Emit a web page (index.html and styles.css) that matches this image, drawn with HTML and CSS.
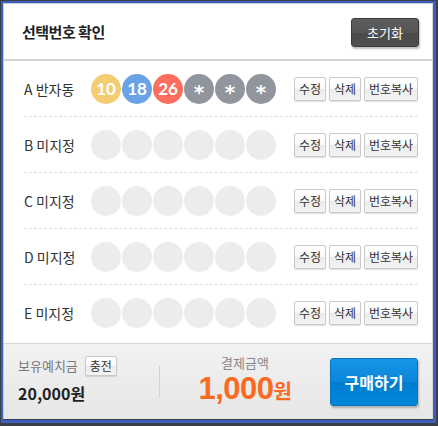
FILE: index.html
```html
<!DOCTYPE html>
<html>
<head>
  <meta charset="UTF-8">
  <title>선택번호 확인</title>
  <link rel="stylesheet" href="styles.css">
</head>
<body>
  <div class="frame">
    <div class="panel">
      <div class="panel-head">
        <h1>선택번호 확인</h1>
        <button class="reset-btn">초기화</button>
      </div>

      <ul class="slot-list">
        <li class="slot">
          <span class="slot-name">A 반자동</span>
          <span class="balls">
            <span class="ball yellow">10</span>
            <span class="ball blue">18</span>
            <span class="ball red">26</span>
            <span class="ball auto">*</span>
            <span class="ball auto">*</span>
            <span class="ball auto">*</span>
          </span>
          <span class="actions">
            <button class="mini-btn">수정</button>
            <button class="mini-btn">삭제</button>
            <button class="mini-btn wide">번호복사</button>
          </span>
        </li>
        <li class="slot">
          <span class="slot-name">B 미지정</span>
          <span class="balls">
            <span class="ball"></span><span class="ball"></span><span class="ball"></span>
            <span class="ball"></span><span class="ball"></span><span class="ball"></span>
          </span>
          <span class="actions">
            <button class="mini-btn">수정</button>
            <button class="mini-btn">삭제</button>
            <button class="mini-btn wide">번호복사</button>
          </span>
        </li>
        <li class="slot">
          <span class="slot-name">C 미지정</span>
          <span class="balls">
            <span class="ball"></span><span class="ball"></span><span class="ball"></span>
            <span class="ball"></span><span class="ball"></span><span class="ball"></span>
          </span>
          <span class="actions">
            <button class="mini-btn">수정</button>
            <button class="mini-btn">삭제</button>
            <button class="mini-btn wide">번호복사</button>
          </span>
        </li>
        <li class="slot">
          <span class="slot-name">D 미지정</span>
          <span class="balls">
            <span class="ball"></span><span class="ball"></span><span class="ball"></span>
            <span class="ball"></span><span class="ball"></span><span class="ball"></span>
          </span>
          <span class="actions">
            <button class="mini-btn">수정</button>
            <button class="mini-btn">삭제</button>
            <button class="mini-btn wide">번호복사</button>
          </span>
        </li>
        <li class="slot">
          <span class="slot-name">E 미지정</span>
          <span class="balls">
            <span class="ball"></span><span class="ball"></span><span class="ball"></span>
            <span class="ball"></span><span class="ball"></span><span class="ball"></span>
          </span>
          <span class="actions">
            <button class="mini-btn">수정</button>
            <button class="mini-btn">삭제</button>
            <button class="mini-btn wide">번호복사</button>
          </span>
        </li>
      </ul>

      <div class="panel-foot">
        <div class="deposit">
          <div class="deposit-label">보유예치금 <button class="mini-btn charge">충전</button></div>
          <div class="deposit-value">20,000원</div>
        </div>
        <div class="pay">
          <div class="pay-label">결제금액</div>
          <div class="pay-value">1,000<small>원</small></div>
        </div>
        <button class="buy-btn">구매하기</button>
      </div>
    </div>
  </div>
</body>
</html>
```

FILE: styles.css
```css
/* Lotto selection confirm panel */
body {
  margin: 0;
  background: #3b3e45;
  font-family: "Noto Sans CJK KR", "Noto Sans", sans-serif;
  color: #333;
}
.frame {
  width: 430px;
  height: 417px;
  margin: 1px 0 0 1px;
  border: solid #3d5fc0;
  border-width: 2px 3px 3px 2px;
}
.panel {
  height: 415px;
  border: 1px solid #c9ccd3;
  border-right-color: #d8d8d8;
  border-bottom: none;
  background: #fff;
  display: flex;
  flex-direction: column;
}
.panel-head {
  height: 55px;
  border-bottom: 2px solid #d3d3d3;
  display: flex;
  align-items: center;
  justify-content: space-between;
  padding: 0 13px 0 18px;
}
.panel-head h1 {
  margin: 0;
  font-size: 15px;
  font-weight: bold;
  color: #222;
  letter-spacing: -0.5px;
  line-height: 20px;
}
.reset-btn {
  width: 68px;
  height: 29px;
  margin-top: 1px;
  border: 1px solid #3a3a3a;
  border-radius: 3px;
  background: linear-gradient(#5e5e5e 0%, #555 50%, #4a4a4a 51%, #505050 100%);
  color: #fff;
  font-family: inherit;
  font-size: 13px;
  line-height: 1;
  box-shadow: 1px 2px 2px rgba(0,0,0,0.25);
  cursor: pointer;
}

.slot-list {
  list-style: none;
  margin: 0;
  padding: 0 14px 0 20px;
}
.slot {
  height: 56px;
  display: flex;
  align-items: center;
  border-bottom: 1px dashed #dedede;
  box-sizing: border-box;
}
.slot:last-child {
  border-bottom: none;
}
.slot-name {
  width: 67px;
  font-size: 14px;
  line-height: 18px;
  color: #333;
}
.balls {
  display: flex;
  gap: 1px;
}
.ball {
  width: 30px;
  height: 30px;
  border-radius: 50%;
  background: #ececec;
  color: #fff;
  font-family: Lato, "Noto Sans", sans-serif;
  font-weight: bold;
  font-size: 17px;
  display: flex;
  align-items: center;
  justify-content: center;
}
.ball.yellow { background: #f4cd72; }
.ball.blue { background: #6aa3e5; }
.ball.red { background: #fd6e5f; }
.ball.auto {
  background: #90959e;
  font-family: "DejaVu Sans", sans-serif;
  font-size: 20px;
  padding-top: 6px;
  box-sizing: border-box;
}
.actions {
  margin-left: auto;
  display: flex;
  gap: 3px;
}
.mini-btn {
  width: 32px;
  height: 24px;
  padding: 0;
  border: 1px solid #c9c9c9;
  border-radius: 2px;
  background: linear-gradient(#fff 0%, #fafafa 50%, #ececec 51%, #f4f4f4 100%);
  color: #333;
  font-family: inherit;
  font-size: 12px;
  line-height: 1;
  box-shadow: 0 1px 1px rgba(0,0,0,0.12);
  cursor: pointer;
}
.mini-btn.wide { width: 54px; }

.panel-foot {
  margin-top: auto;
  height: 75px;
  border-top: 1px solid #d8d8d8;
  background: linear-gradient(#f2f2f2, #e6e6e6);
  display: flex;
  align-items: center;
  padding: 0 12px 0 14px;
}
.deposit {
  width: 141px;
  height: 32px;
  border-right: 1px solid #d2d2d2;
  position: relative;
}
.deposit-label {
  position: absolute;
  top: -10px;
  left: 0;
  display: flex;
  align-items: center;
  gap: 7px;
  font-size: 13px;
  color: #777;
  white-space: nowrap;
}
.charge {
  height: 20px;
  font-size: 12px;
}
.deposit-value {
  position: absolute;
  top: 17px;
  left: 0;
  font-size: 16px;
  font-weight: bold;
  color: #222;
  line-height: 20px;
  white-space: nowrap;
}
.pay {
  width: 170px;
  text-align: center;
  margin-top: -4px;
}
.pay-label {
  font-size: 13px;
  color: #888;
  line-height: 16px;
  margin-bottom: 5px;
}
.pay-value {
  font-family: "Liberation Sans", Arial, sans-serif;
  font-size: 31px;
  font-weight: bold;
  color: #fa6a1f;
  line-height: 26px;
  letter-spacing: -0.5px;
}
.pay-value small {
  font-family: "Noto Sans CJK KR", sans-serif;
  font-size: 20px;
}
.buy-btn {
  width: 88px;
  height: 48px;
  border: 1px solid #0a74c0;
  border-radius: 3px;
  background: linear-gradient(#1695e6 0%, #0b86d8 50%, #007ccf 51%, #0088da 100%);
  color: #fff;
  font-family: inherit;
  font-size: 16px;
  font-weight: bold;
  box-shadow: 1px 2px 2px rgba(0,0,0,0.25);
  cursor: pointer;
}
```
